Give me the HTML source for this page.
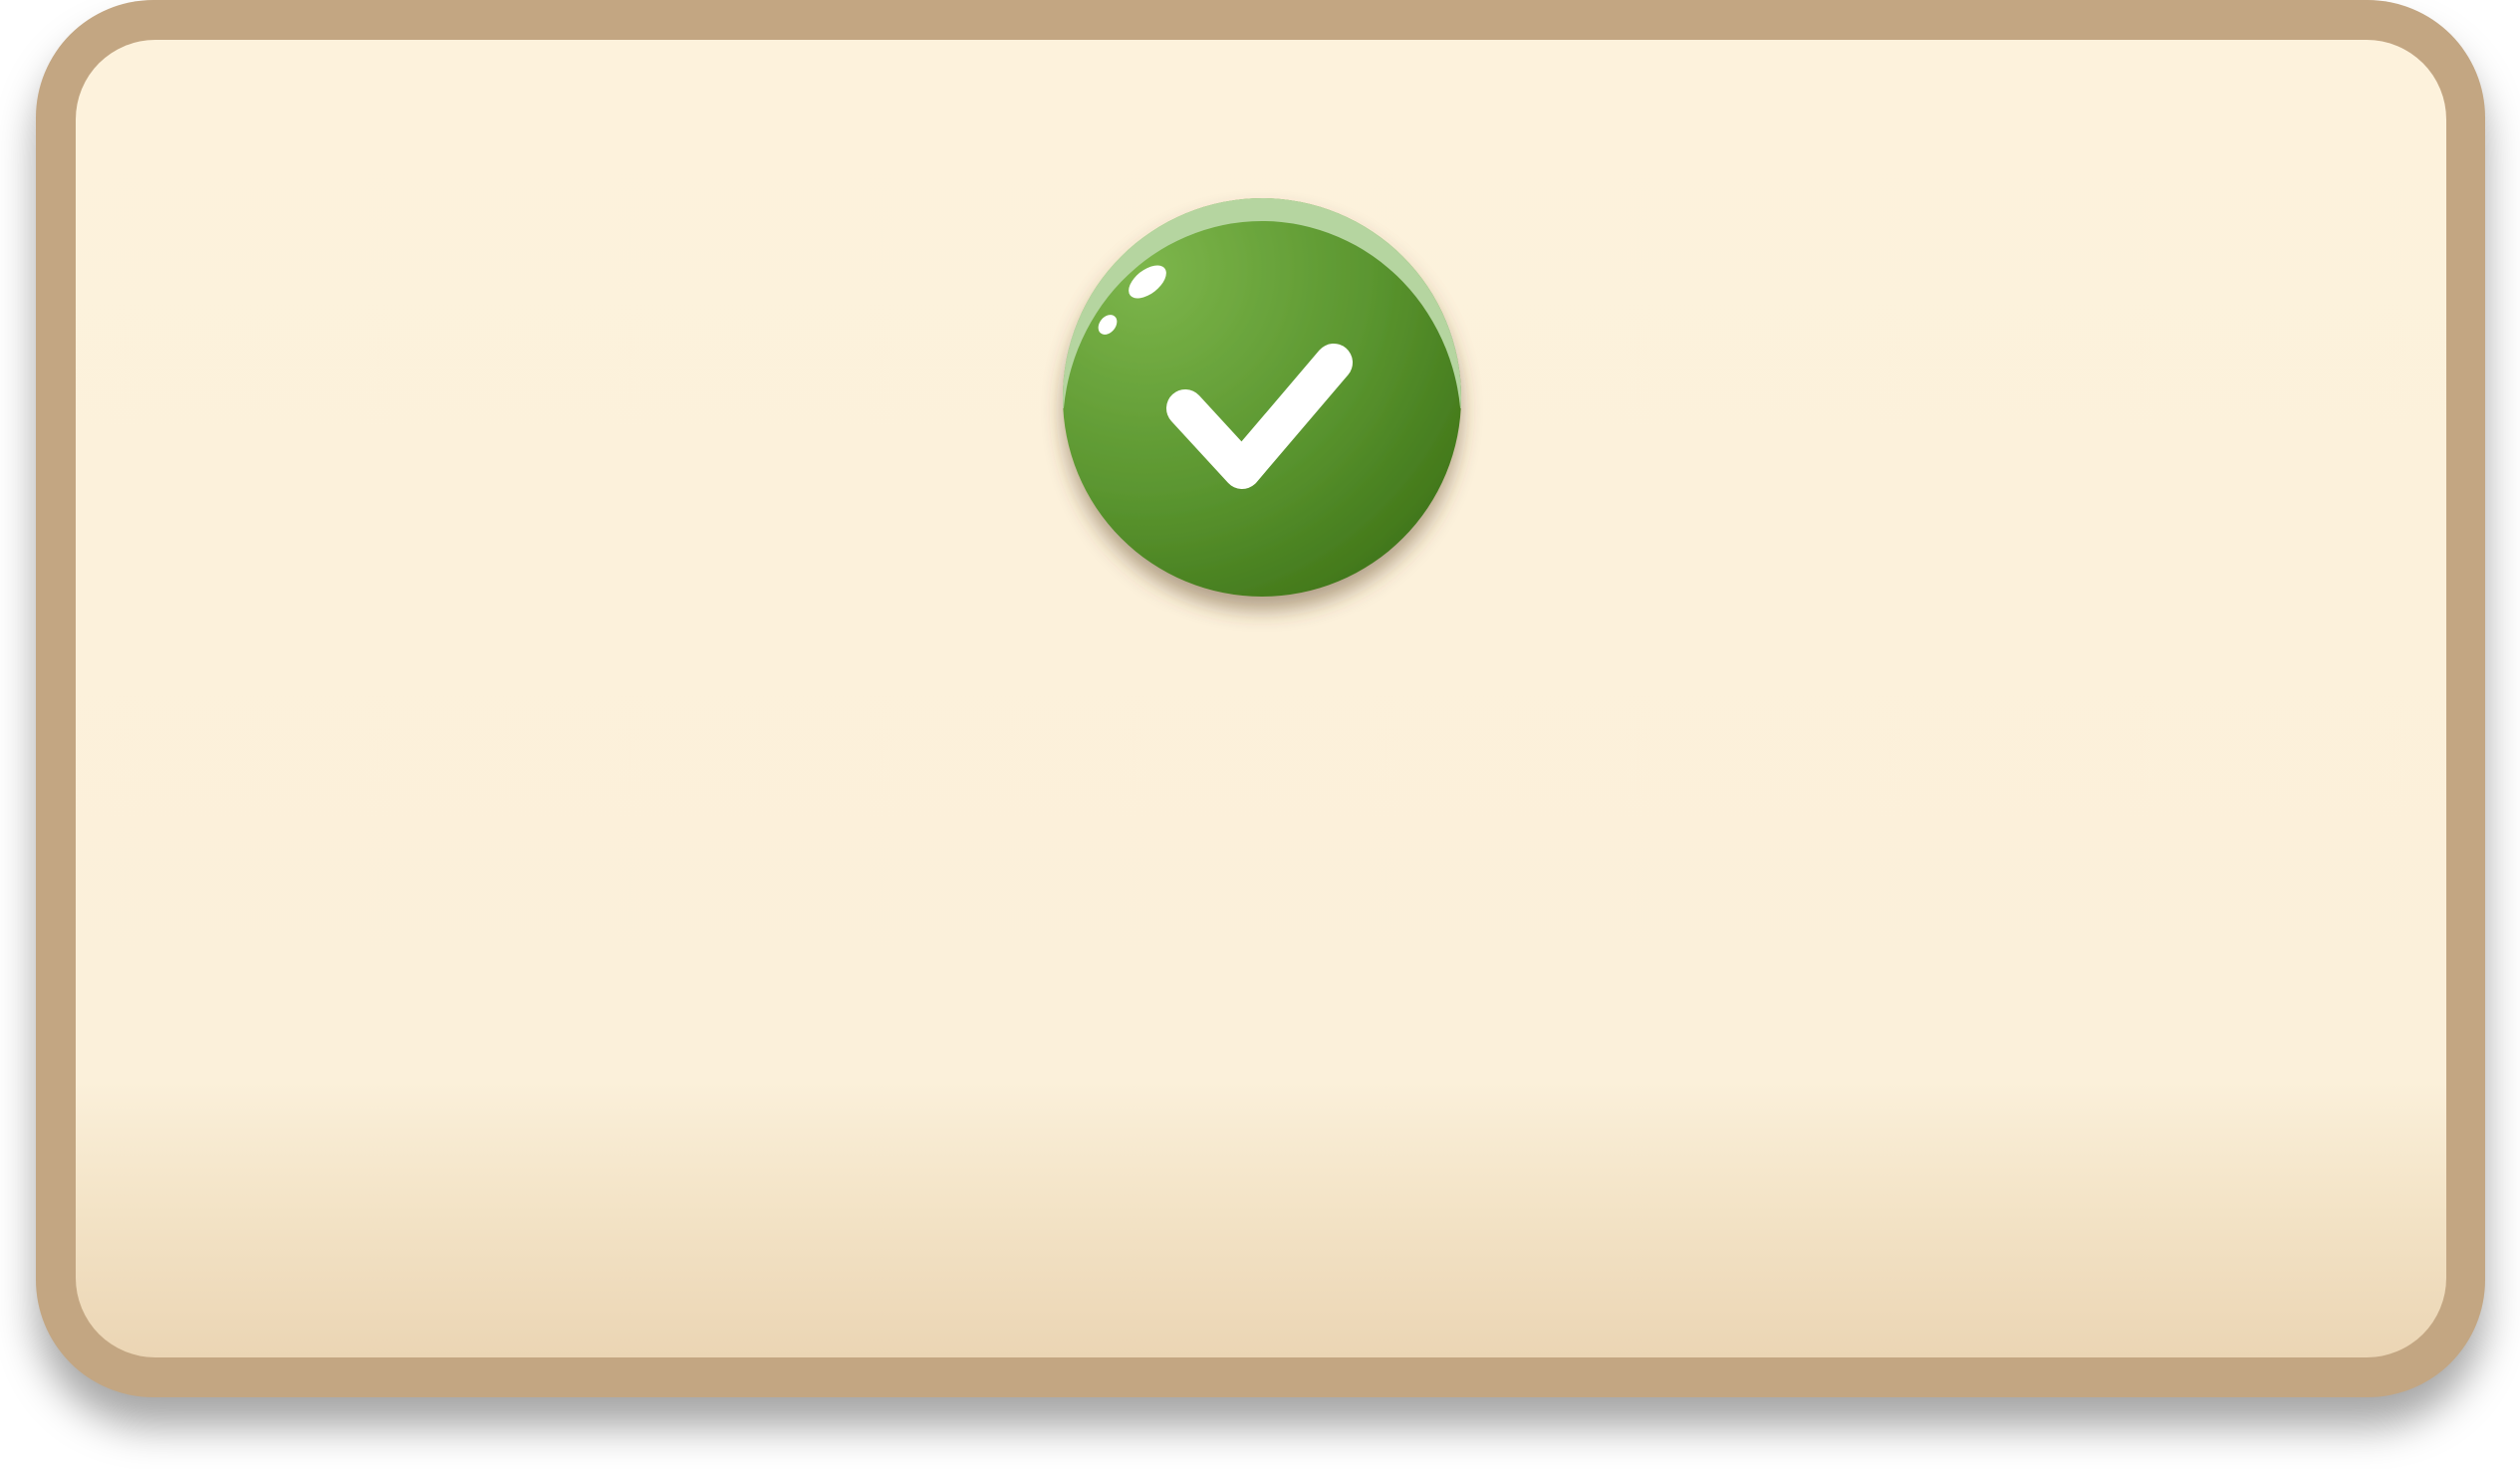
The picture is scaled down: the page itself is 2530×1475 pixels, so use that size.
<!DOCTYPE html>
<html><head><style>
html,body{margin:0;padding:0;background:#fff;width:2530px;height:1475px;overflow:hidden}
.outer{position:absolute;left:36px;top:0;width:2459px;height:1403px;background:#c3a682;border-radius:118px;box-shadow:0 30px 40px rgba(0,0,0,0.35)}
.inner{position:absolute;left:40px;top:40px;right:39px;bottom:40px;border-radius:80px;background:linear-gradient(to bottom,#fdf2dc 0%,#fbf0da 79%,#f3e3c6 89%,#ebd5b4 100%)}
svg{position:absolute;left:0;top:0}
</style></head><body>
<div class="outer"><div class="inner"></div></div>
<svg width="2530" height="1475" viewBox="0 0 2530 1475">
<defs>
<radialGradient id="g" cx="1150" cy="270" r="420" gradientUnits="userSpaceOnUse">
<stop offset="0" stop-color="#7db64b"/><stop offset="0.55" stop-color="#5a952f"/><stop offset="1" stop-color="#3a6e14"/>
</radialGradient>
<filter id="sh" x="-30%" y="-30%" width="160%" height="170%"><feDropShadow dx="0" dy="14" stdDeviation="10" flood-color="#5a4020" flood-opacity="0.45"/></filter>
<mask id="cres">
<rect x="1000" y="150" width="540" height="260" fill="#fff"/>
<ellipse cx="1267" cy="430" rx="200" ry="208" fill="#000"/>
</mask>
</defs>
<g filter="url(#sh)">
<circle cx="1267" cy="399" r="200" fill="url(#g)"/>
</g>
<circle cx="1267" cy="399" r="200" fill="#b5d5a0" mask="url(#cres)"/>
<ellipse cx="1152" cy="283" rx="22" ry="12" transform="rotate(-38 1152 283)" fill="#fff"/>
<ellipse cx="1112" cy="326" rx="11" ry="8" transform="rotate(-50 1112 326)" fill="#fff"/>
<polyline points="1190,410 1247,472 1339,364" fill="none" stroke="#fff" stroke-width="38" stroke-linecap="round" stroke-linejoin="round"/>
</svg>
</body></html>
